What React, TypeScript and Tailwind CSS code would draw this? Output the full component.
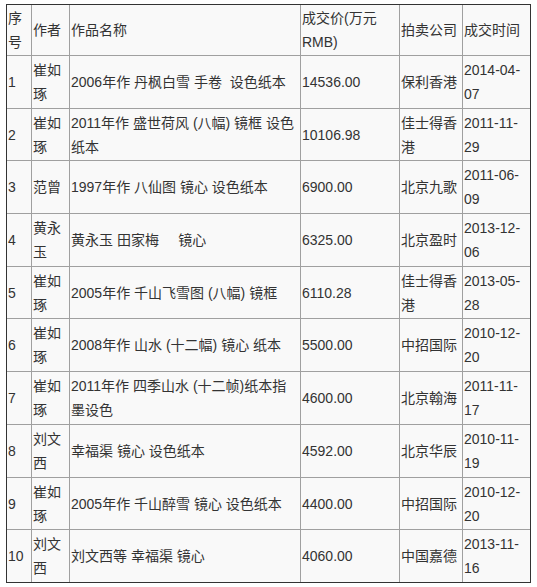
import React from 'react';

type Row = {
  no: string;
  author: string;
  title: string;
  price: string;
  house: string;
  date: string;
};

const rows: Row[] = [
  { no: '1', author: '崔如琢', title: '2006年作 丹枫白雪 手卷\u00a0\u00a0设色纸本', price: '14536.00', house: '保利香港', date: '2014-04-07' },
  { no: '2', author: '崔如琢', title: '2011年作 盛世荷风 (八幅) 镜框 设色纸本', price: '10106.98', house: '佳士得香港', date: '2011-11-29' },
  { no: '3', author: '范曾', title: '1997年作 八仙图 镜心 设色纸本', price: '6900.00', house: '北京九歌', date: '2011-06-09' },
  { no: '4', author: '黄永玉', title: '黄永玉 田家梅\u00a0\u00a0\u00a0\u00a0\u00a0镜心', price: '6325.00', house: '北京盈时', date: '2013-12-06' },
  { no: '5', author: '崔如琢', title: '2005年作 千山飞雪图 (八幅) 镜框', price: '6110.28', house: '佳士得香港', date: '2013-05-28' },
  { no: '6', author: '崔如琢', title: '2008年作 山水 (十二幅) 镜心 纸本', price: '5500.00', house: '中招国际', date: '2010-12-20' },
  { no: '7', author: '崔如琢', title: '2011年作 四季山水 (十二帧)纸本指墨设色', price: '4600.00', house: '北京翰海', date: '2011-11-17' },
  { no: '8', author: '刘文西', title: '幸福渠 镜心 设色纸本', price: '4592.00', house: '北京华辰', date: '2010-11-19' },
  { no: '9', author: '崔如琢', title: '2005年作 千山醉雪 镜心 设色纸本', price: '4400.00', house: '中招国际', date: '2010-12-20' },
  { no: '10', author: '刘文西', title: '刘文西等 幸福渠 镜心', price: '4060.00', house: '中国嘉德', date: '2013-11-16' },
];

function DateText({ value }: { value: string }) {
  const cut = value.lastIndexOf('-') + 1;
  return (
    <>
      {value.slice(0, cut)}
      <wbr />
      {value.slice(cut)}
    </>
  );
}

const cell =
  'border-r border-b border-[#a0a0a0] last:border-r-0 pl-[1px] pr-0 pt-[2px] pb-[1.7px] align-middle text-left font-normal break-words';

export default function App() {
  return (
    <div
      className="min-h-[587px] bg-white pt-[4px] pl-[6px] text-[14px] leading-6 text-[#333]"
      style={{ fontFamily: '"Liberation Sans", Arial, "Noto Sans CJK SC", sans-serif' }}
    >
      <div className="w-[525px] border border-[#333] bg-[#f9f9f9]">
        <table className="w-full table-fixed border-separate border-spacing-0">
          <thead>
            <tr>
              <th className={`${cell} w-[25px] !pt-[1px] !pb-[1px]`}>序号</th>
              <th className={`${cell} w-[38px] !pt-[1px] !pb-[1px]`}>作者</th>
              <th className={`${cell} w-[231px] !pt-[1px] !pb-[1px]`}>作品名称</th>
              <th className={`${cell} w-[99px] !pt-[1px] !pb-[1px]`}>成交价(万元RMB)</th>
              <th className={`${cell} w-[63px] !pt-[1px] !pb-[1px]`}>拍卖公司</th>
              <th className={`${cell} w-[67px] !pt-[1px] !pb-[1px]`}>成交时间</th>
            </tr>
          </thead>
          <tbody>
            {rows.map((r) => (
              <tr key={r.no} className="[&:last-child>td]:border-b-0">
                <td className={cell}>{r.no}</td>
                <td className={cell}>{r.author}</td>
                <td className={cell}>{r.title}</td>
                <td className={cell}>{r.price}</td>
                <td className={cell}>{r.house}</td>
                <td className={cell}>
                  <DateText value={r.date} />
                </td>
              </tr>
            ))}
          </tbody>
        </table>
      </div>
    </div>
  );
}
